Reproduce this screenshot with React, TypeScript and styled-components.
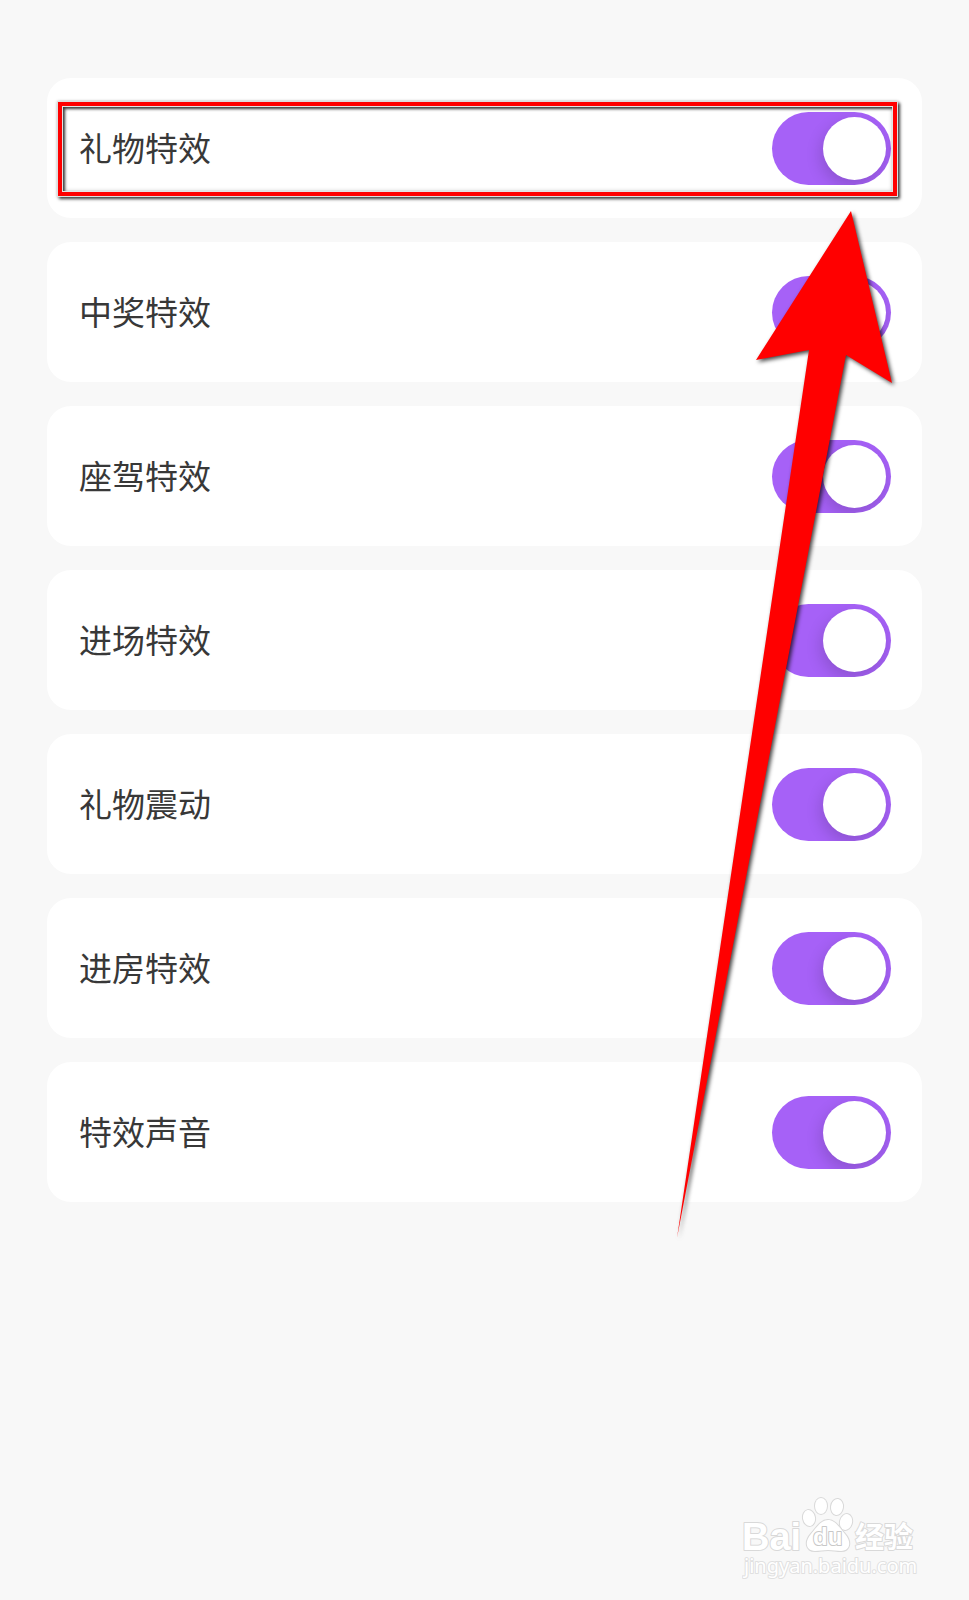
import React, { useState } from "react";
import styled, { createGlobalStyle } from "styled-components";

const GlobalStyle = createGlobalStyle`
  *, *::before { box-sizing: border-box; }
  body {
    margin: 0;
    background: #f8f8f8;
    color: #383838;
    font-family: "Noto Sans CJK SC", "Noto Sans", sans-serif;
  }
`;

const Page = styled.main`
  position: relative;
  display: flex;
  flex-direction: column;
  min-height: 100vh;
  padding: 78px 47px 16px;
`;

const SettingList = styled.ul`
  display: flex;
  flex-direction: column;
  gap: 24px;
  margin: 0;
  padding: 0;
  list-style: none;
`;

const SettingCard = styled.li`
  position: relative;
  border-radius: 24px;
  background: #ffffff;
`;

const SettingRow = styled.label`
  display: flex;
  align-items: center;
  justify-content: space-between;
  min-height: 140px;
  padding: 0 31px 0 32px;
  cursor: pointer;
`;

const SettingName = styled.span`
  padding-bottom: 2px;
  font-size: 33px;
  line-height: 48px;
`;

const Switch = styled.input`
  appearance: none;
  flex: none;
  width: 119px;
  height: 73px;
  margin: 0;
  padding: 5px;
  border-radius: 37px;
  background: #cccccc;
  overflow: hidden;
  cursor: pointer;

  &::before {
    content: "";
    display: block;
    width: 63px;
    height: 63px;
    border-radius: 50%;
    background: #ffffff;
    box-shadow: -2px 6px 16px rgba(0, 0, 0, 0.16);
  }

  &:checked {
    background: #a661f7;
  }

  &:checked::before {
    margin-left: auto;
  }
`;

const Highlight = styled.div`
  position: absolute;
  top: 24px;
  right: 25px;
  bottom: 22px;
  left: 11px;
  border: 4px solid #ff0000;
  box-shadow:
    0 0 0 1px #dedede,
    2px 2px 3px 1px rgba(0, 0, 0, 0.75),
    0 0 3px 1px rgba(0, 0, 0, 0.2),
    inset 0 0 0 1px #e4e4e4,
    inset 2px 2px 3px 1px rgba(0, 0, 0, 0.75),
    inset 0 0 4px 1px rgba(0, 0, 0, 0.2);
  pointer-events: none;
`;

const Arrow = styled.svg`
  position: absolute;
  top: 210px;
  right: 76px;
  width: 217px;
  height: 1030px;
  overflow: visible;
  filter: drop-shadow(2px 2px 2px rgba(0, 0, 0, 0.75));
  pointer-events: none;
`;

const Watermark = styled.svg`
  align-self: flex-end;
  width: 180px;
  height: 92px;
  margin-top: auto;
  fill: #ffffff;
  stroke: #d9d9d9;
  stroke-width: 2;
  stroke-linejoin: round;
  paint-order: stroke;
`;

const BrandText = styled.text`
  font: bold 38px "Liberation Sans", sans-serif;
`;

const PawText = styled.text`
  font: bold 24px "Liberation Sans", sans-serif;
  stroke: #c8c8c8;
`;

const BrandHanText = styled.text`
  font: bold 29px "Noto Sans CJK SC", sans-serif;
`;

const AddressText = styled.text`
  font: 20px "Noto Sans", sans-serif;
  stroke: #e0e0e0;
`;

const settings = [
  "礼物特效",
  "中奖特效",
  "座驾特效",
  "进场特效",
  "礼物震动",
  "进房特效",
  "特效声音",
];

function Setting({ name, highlighted }: { name: string; highlighted: boolean }) {
  const [on, setOn] = useState(true);
  return (
    <SettingCard>
      <SettingRow>
        <SettingName>{name}</SettingName>
        <Switch
          type="checkbox"
          role="switch"
          checked={on}
          onChange={(event) => setOn(event.target.checked)}
        />
      </SettingRow>
      {highlighted && <Highlight />}
    </SettingCard>
  );
}

export default function App() {
  return (
    <>
      <GlobalStyle />
      <Page>
        <SettingList>
          {settings.map((name, index) => (
            <Setting key={name} name={name} highlighted={index === 0} />
          ))}
        </SettingList>
        <Arrow viewBox="0 0 217 1030" aria-hidden="true">
          <path d="M175 1 L216 173 L170 145 L1 1028 L133 140 L80 150 Z" fill="#ff0000" />
        </Arrow>
        <Watermark viewBox="0 0 180 92">
          <BrandText x="0" y="58">Bai</BrandText>
          <ellipse cx="67" cy="26" rx="6" ry="8" transform="rotate(-10 67 26)" />
          <ellipse cx="79" cy="14" rx="6" ry="8" />
          <ellipse cx="95" cy="15" rx="6" ry="8" transform="rotate(8 95 15)" />
          <ellipse cx="104" cy="30" rx="6" ry="8" transform="rotate(14 104 30)" />
          <path d="M86 28 C93 28 97 35 103 42 C110 50 108 59 99 59 C94 59 91 58 86 58 C81 58 78 59 73 59 C64 59 62 50 69 42 C75 35 79 28 86 28 Z" />
          <PawText x="71" y="53">du</PawText>
          <BrandHanText x="113" y="56">经验</BrandHanText>
          <AddressText x="2" y="81">jingyan.baidu.com</AddressText>
        </Watermark>
      </Page>
    </>
  );
}
